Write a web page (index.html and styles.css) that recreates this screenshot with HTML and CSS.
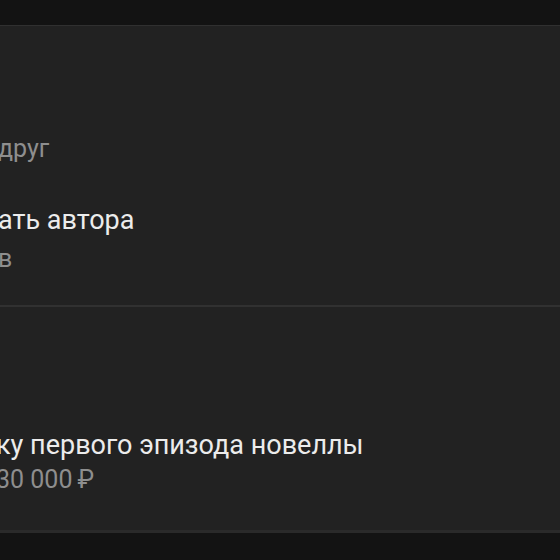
FILE: index.html
```html
<!DOCTYPE html>
<html lang="ru">
<head>
  <meta charset="UTF-8">
  <meta name="viewport" content="width=device-width, initial-scale=1.0">
  <title>Цели</title>
  <link rel="stylesheet" href="styles.css">
</head>
<body>
  <div class="topbar"></div>
  <main class="card">
    <section class="block block-first">
      <p class="muted cut">друг</p>
      <div class="item">
        <p class="title cut">ать автора</p>
        <p class="muted cut">в</p>
      </div>
    </section>
    <section class="block block-second">
      <div class="item item-goal">
        <p class="title cut-more">ку первого эпизода новеллы</p>
        <p class="muted cut-more">30 000&#8201;₽</p>
      </div>
    </section>
  </main>
  <div class="bottombar"></div>
</body>
</html>
```

FILE: styles.css
```css
html, body {
  margin: 0;
  padding: 0;
  background-color: #131313;
}

body {
  font-family: Roboto, "Noto Sans", sans-serif;
  overflow: hidden;
  height: 560px;
}

p {
  margin: 0;
  white-space: nowrap;
}

.topbar {
  height: 25px;
}

.card {
  background-color: #222222;
  border-top: 1px solid #303030;
  border-bottom: 3px solid #2a2a2a;
}

.block + .block {
  border-top: 2px solid #313131;
}

.block-first {
  padding: 108px 0 31px;
}

.block-second {
  padding: 122px 0 35px;
}

.item {
  margin-top: 40px;
}

.item-goal {
  margin-top: 0;
}

.title {
  color: #ececec;
  font-size: 27px;
  line-height: 32px;
}

.muted {
  color: #8e8e8e;
  font-size: 25px;
  line-height: 30px;
}

.item .muted {
  margin-top: 8px;
}

.item-goal .muted {
  margin-top: 4px;
}

/* content is cropped at the left edge */
.cut {
  margin-left: -2px;
}

.cut-more {
  margin-left: -4px;
}

.bottombar {
  height: 25px;
}
```
